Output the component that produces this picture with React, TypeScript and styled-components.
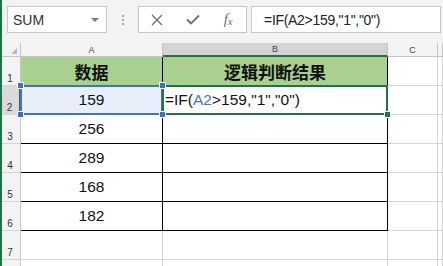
import React from 'react';
import styled, { createGlobalStyle } from 'styled-components';

const GlobalStyle = createGlobalStyle`
  html, body {
    margin: 0;
    padding: 0;
    background: #ffffff;
  }
  body {
    width: 443px;
    height: 266px;
    overflow: hidden;
    font-family: "Liberation Sans", Arial, sans-serif;
  }
`;

const Window = styled.div`
  width: 443px;
  height: 266px;
  box-sizing: border-box;
  border-left: 2px solid #217346;
  display: flex;
  flex-direction: column;
  overflow: hidden;
  background: #ffffff;
`;

const FormulaBar = styled.div`
  height: 43px;
  flex: none;
  box-sizing: border-box;
  background: #f3f3f3;
  display: flex;
  align-items: flex-start;
  padding: 6px 2px 0 5px;
`;

const NameBox = styled.div`
  width: 100px;
  height: 27px;
  box-sizing: border-box;
  background: #ffffff;
  border: 1px solid #c6c6c6;
  display: flex;
  align-items: center;
  justify-content: space-between;
  padding: 0 7px 0 5px;
  font-size: 14px;
  color: #333333;
`;

const DropArrow = styled.span`
  width: 0;
  height: 0;
  border-left: 4px solid transparent;
  border-right: 4px solid transparent;
  border-top: 4px solid #7a7a7a;
`;

const Grip = styled.div`
  width: 31px;
  height: 27px;
  display: flex;
  flex-direction: column;
  align-items: center;
  justify-content: center;
  gap: 2px;

  span {
    width: 2px;
    height: 2px;
    background: #a8a8a8;
  }
`;

const ButtonBox = styled.div`
  width: 109px;
  height: 27px;
  box-sizing: border-box;
  background: #ffffff;
  border: 1px solid #c6c6c6;
  display: flex;
  align-items: center;
`;

const BarButton = styled.div`
  width: 36px;
  height: 25px;
  display: flex;
  align-items: center;
  justify-content: center;
  color: #6e6e6e;
`;

const Fx = styled.span`
  font-family: "Liberation Serif", "Times New Roman", serif;
  font-style: italic;
  font-size: 15px;
  color: #6e6e6e;

  sub {
    font-size: 11px;
    vertical-align: -1px;
  }
`;

const FormulaInput = styled.div`
  flex: 1;
  height: 27px;
  margin-left: 4px;
  box-sizing: border-box;
  background: #ffffff;
  border: 1px solid #c6c6c6;
  display: flex;
  align-items: center;
  padding-left: 12px;
  font-size: 14px;
  letter-spacing: -0.3px;
  color: #222222;
`;

const Sheet = styled.div`
  flex: none;
  display: grid;
  grid-template-columns: 19px 142px 225px 50px 1fr;
  grid-template-rows: 14px repeat(8, 29px);
`;

const Corner = styled.div`
  position: relative;
  box-sizing: border-box;
  background: #f3f3f3;
  border-right: 1px solid #c6c6c6;
  border-bottom: 1px solid #c6c6c6;

  &::after {
    content: '';
    position: absolute;
    right: 3px;
    bottom: 2px;
    width: 0;
    height: 0;
    border-left: 6px solid transparent;
    border-bottom: 6px solid #b9b9b9;
  }
`;

const ColHeader = styled.div<{ $selected?: boolean }>`
  box-sizing: border-box;
  background: ${p => (p.$selected ? '#d3d3d3' : '#f3f3f3')};
  border-right: 1px solid #c6c6c6;
  border-bottom: ${p => (p.$selected ? '2px solid #217346' : '1px solid #c6c6c6')};
  display: flex;
  align-items: flex-end;
  justify-content: center;
  padding-bottom: 1px;
  font-size: 9px;
  line-height: 10px;
  color: #444444;
`;

const RowHeader = styled.div<{ $selected?: boolean }>`
  box-sizing: border-box;
  background: ${p => (p.$selected ? '#dadada' : '#f3f3f3')};
  border-right: ${p => (p.$selected ? '2px solid #217346' : '1px solid #c6c6c6')};
  border-bottom: 1px solid #d4d4d4;
  display: flex;
  align-items: flex-end;
  justify-content: center;
  padding: 0 2px 1px 0;
  font-size: 10px;
  line-height: 11px;
  color: #333333;
`;

const Cell = styled.div<{ $boxed?: boolean; $head?: boolean; $fill?: string; $align?: string }>`
  position: relative;
  box-sizing: border-box;
  background: ${p => p.$fill || '#ffffff'};
  border-right: 1px solid ${p => (p.$boxed ? '#000000' : '#d4d4d4')};
  border-bottom: 1px solid ${p => (p.$boxed ? '#000000' : '#d4d4d4')};
  display: flex;
  align-items: center;
  justify-content: ${p => p.$align || 'center'};
  padding-left: ${p => (p.$align === 'flex-start' ? '2px' : '0')};
  white-space: nowrap;
  font-family: ${p =>
    p.$head
      ? '"Noto Sans CJK SC", "Noto Sans", sans-serif'
      : '"Liberation Sans", Arial, sans-serif'};
  font-size: ${p => (p.$head ? '17px' : '15.5px')};
  font-weight: ${p => (p.$head ? 700 : 400)};
  color: #111111;
`;

const Selection = styled.span<{ $color: string }>`
  position: absolute;
  top: -1px;
  left: -1px;
  right: -1px;
  bottom: -1px;
  border: 2px solid ${p => p.$color};
  pointer-events: none;
  z-index: 1;
`;

const Handle = styled.span<{ $color: string; $x: 'left' | 'right'; $y: 'top' | 'bottom' }>`
  position: absolute;
  ${p => p.$x}: -4px;
  ${p => p.$y}: -4px;
  width: 5px;
  height: 5px;
  background: ${p => p.$color};
  border: 1px solid #ffffff;
  z-index: 2;
`;

const Ref = styled.span`
  color: #4a74c9;
`;

const CloseIcon = () => (
  <svg width="12" height="12" viewBox="0 0 12 12">
    <path d="M1 1 L11 11 M11 1 L1 11" stroke="#6e6e6e" strokeWidth="1.3" fill="none" />
  </svg>
);

const CheckIcon = () => (
  <svg width="14" height="11" viewBox="0 0 14 11">
    <path d="M1 5.5 L5 9.5 L13 1.5" stroke="#6e6e6e" strokeWidth="1.8" fill="none" />
  </svg>
);

const formula = '=IF(A2>159,"1","0")';

const rows = [
  { a: '数据', b: '逻辑判断结果', head: true },
  { a: '159', active: true },
  { a: '256' },
  { a: '289' },
  { a: '168' },
  { a: '182' },
  {},
  {},
];

const App = () => {
  return (
    <Window>
      <GlobalStyle />
      <FormulaBar>
        <NameBox>
          <span>SUM</span>
          <DropArrow />
        </NameBox>
        <Grip>
          <span />
          <span />
          <span />
        </Grip>
        <ButtonBox>
          <BarButton>
            <CloseIcon />
          </BarButton>
          <BarButton>
            <CheckIcon />
          </BarButton>
          <BarButton>
            <Fx>
              f<sub>x</sub>
            </Fx>
          </BarButton>
        </ButtonBox>
        <FormulaInput>{formula}</FormulaInput>
      </FormulaBar>

      <Sheet>
        <Corner />
        <ColHeader>A</ColHeader>
        <ColHeader $selected>B</ColHeader>
        <ColHeader>C</ColHeader>
        <ColHeader />

        {rows.map((row, i) => {
          const boxed = i < 6;
          return (
            <React.Fragment key={i}>
              <RowHeader $selected={row.active}>{i < 7 ? i + 1 : ''}</RowHeader>
              <Cell
                $boxed={boxed}
                $head={row.head}
                $fill={row.head ? '#a9d08e' : row.active ? '#e8effa' : undefined}
              >
                {row.a}
                {row.active && (
                  <>
                    <Selection $color="#4472c4" />
                    <Handle $color="#3f6fbf" $x="left" $y="top" />
                    <Handle $color="#3f6fbf" $x="right" $y="top" />
                    <Handle $color="#3f6fbf" $x="left" $y="bottom" />
                    <Handle $color="#3f6fbf" $x="right" $y="bottom" />
                  </>
                )}
              </Cell>
              <Cell
                $boxed={boxed}
                $head={row.head}
                $fill={row.head ? '#a9d08e' : undefined}
                $align={row.active ? 'flex-start' : 'center'}
              >
                {row.b}
                {row.active && (
                  <>
                    =IF(<Ref>A2</Ref>&gt;159,"1","0")
                    <Selection $color="#217346" />
                    <Handle $color="#217346" $x="right" $y="bottom" />
                  </>
                )}
              </Cell>
              <Cell />
              <Cell />
            </React.Fragment>
          );
        })}
      </Sheet>
    </Window>
  );
};

export default App;
